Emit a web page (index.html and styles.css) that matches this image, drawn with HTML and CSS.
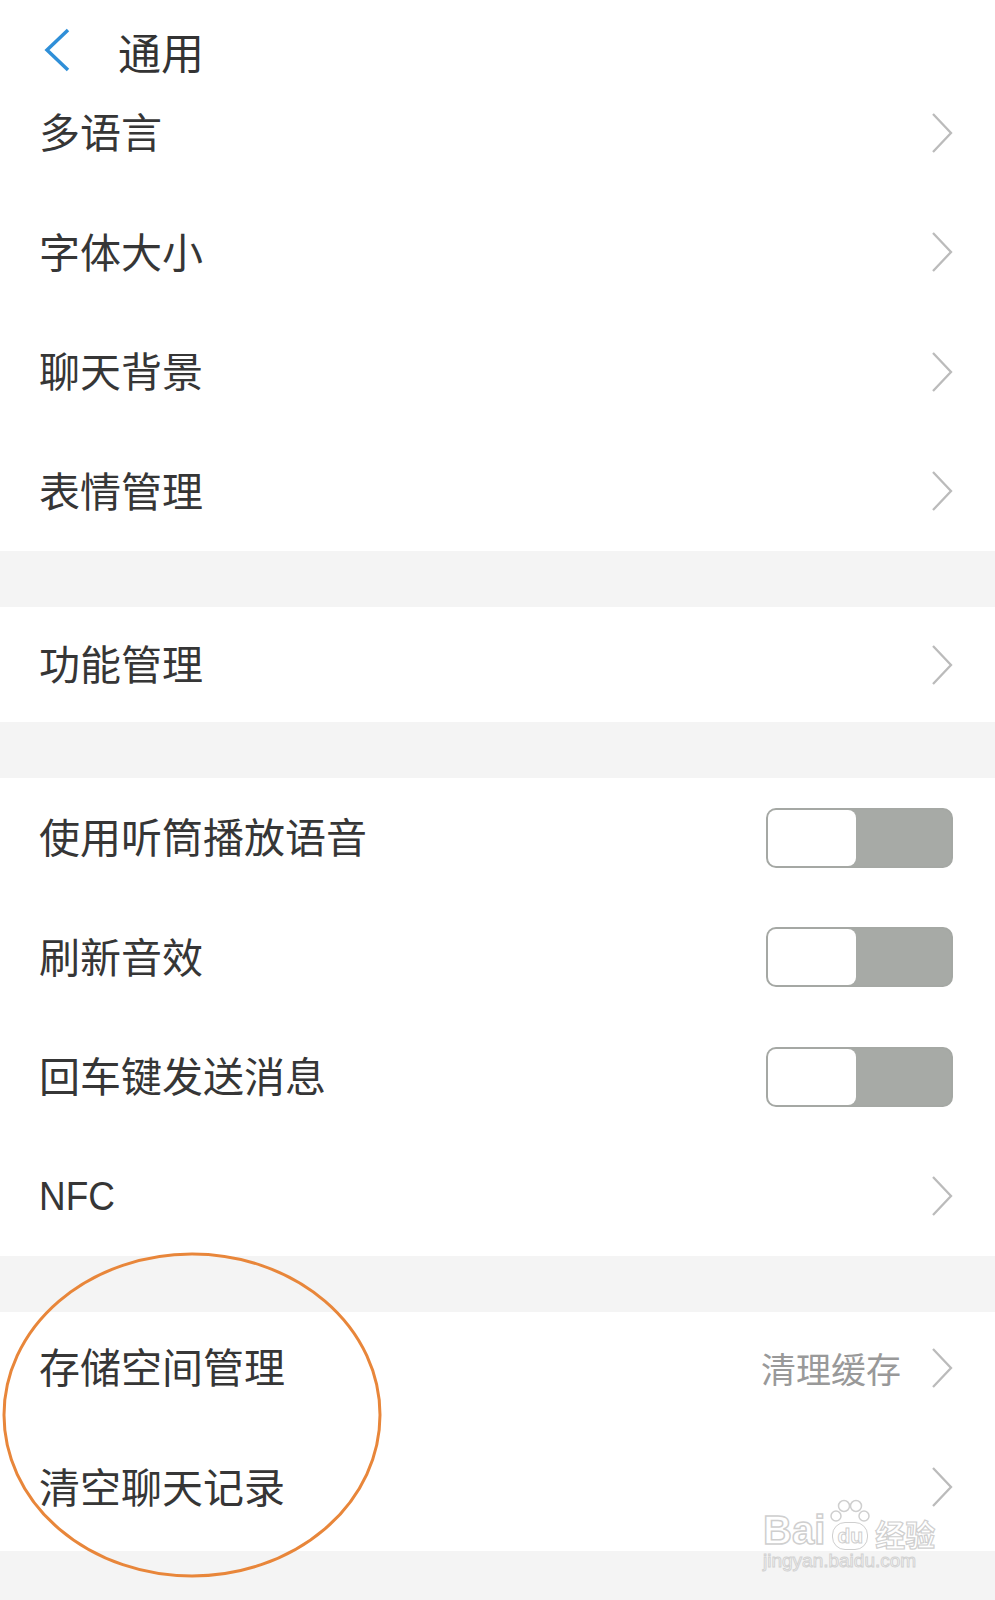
FILE: index.html
```html
<!DOCTYPE html>
<html lang="zh-CN">

<head>
  <meta charset="UTF-8">
  <meta name="viewport" content="width=device-width, initial-scale=1.0">
  <title>通用</title>
  <link rel="stylesheet" href="styles.css">
</head>

<body>
  <div class="screen">
    <header class="topbar">
      <svg class="back" viewBox="0 0 28 44" width="28" height="44">
        <polyline points="25,2 4,22 25,42" />
      </svg>
      <h1>通用</h1>
    </header>

    <section class="group first">
      <div class="row"><span class="label">多语言</span><svg class="chev" viewBox="0 0 22 40"><polyline points="2,1 20,20 2,39" /></svg></div>
      <div class="row"><span class="label">字体大小</span><svg class="chev" viewBox="0 0 22 40"><polyline points="2,1 20,20 2,39" /></svg></div>
      <div class="row"><span class="label">聊天背景</span><svg class="chev" viewBox="0 0 22 40"><polyline points="2,1 20,20 2,39" /></svg></div>
      <div class="row"><span class="label">表情管理</span><svg class="chev" viewBox="0 0 22 40"><polyline points="2,1 20,20 2,39" /></svg></div>
    </section>

    <section class="group">
      <div class="row short"><span class="label">功能管理</span><svg class="chev" viewBox="0 0 22 40"><polyline points="2,1 20,20 2,39" /></svg></div>
    </section>

    <section class="group">
      <div class="row"><span class="label">使用听筒播放语音</span><span class="toggle"><span class="knob"></span></span></div>
      <div class="row"><span class="label">刷新音效</span><span class="toggle"><span class="knob"></span></span></div>
      <div class="row"><span class="label">回车键发送消息</span><span class="toggle"><span class="knob"></span></span></div>
      <div class="row"><span class="label latin">NFC</span><svg class="chev" viewBox="0 0 22 40"><polyline points="2,1 20,20 2,39" /></svg></div>
    </section>

    <section class="group last">
      <div class="row"><span class="label">存储空间管理</span><span class="hint">清理缓存</span><svg class="chev" viewBox="0 0 22 40"><polyline points="2,1 20,20 2,39" /></svg></div>
      <div class="row"><span class="label">清空聊天记录</span><svg class="chev" viewBox="0 0 22 40"><polyline points="2,1 20,20 2,39" /></svg></div>
    </section>

    <!-- hand-drawn highlight -->
    <svg class="circle" viewBox="0 0 384 330" width="384" height="330">
      <ellipse cx="192" cy="164" rx="188" ry="161" />
    </svg>

    <div class="watermark">
      <div class="wm-top">
        <span class="wm-bai">Bai</span>
        <span class="wm-du">
          <svg class="paw" viewBox="0 0 48 30" width="48" height="30">
            <circle cx="10" cy="18" r="5" />
            <circle cx="18" cy="8" r="5.5" />
            <circle cx="30" cy="8" r="5.5" />
            <circle cx="38" cy="18" r="5" />
          </svg>
          <span class="du">du</span>
        </span>
        <span class="wm-cn">经验</span>
      </div>
      <div class="wm-url">jingyan.baidu.com</div>
    </div>
  </div>
</body>

</html>
```

FILE: styles.css
```css
body {
  margin: 0;
  background-color: #f4f4f4;
  font-family: "Noto Sans CJK SC", "Noto Sans", sans-serif;
  color: #333;
}

.screen {
  position: relative;
  width: 995px;
  height: 1600px;
  overflow: hidden;
  background-color: #f4f4f4;
}

.topbar {
  height: 73px;
  background-color: #fff;
  display: flex;
  align-items: flex-end;
  padding-left: 43px;
  box-sizing: border-box;
}

.back {
  margin-bottom: 1px;
}

.back polyline {
  fill: none;
  stroke: #2f8fd8;
  stroke-width: 3.5;
}

h1 {
  margin: 0 0 0 47px;
  font-size: 43px;
  font-weight: 400;
  line-height: 1;
  color: #333;
}

.group {
  background-color: #fff;
  margin-top: 56px;
}

.group.first {
  margin-top: 0;
}

.row {
  height: 119.5px;
  display: flex;
  align-items: center;
  padding: 0 42px 0 39px;
}

.label {
  flex-grow: 1;
  font-size: 41px;
  line-height: 1;
  color: #363636;
  margin-top: -4px;
}

.group.last .row {
  box-sizing: border-box;
  padding-bottom: 8px;
}

.row.short {
  height: 115px;
}

.label.latin {
  font-family: "Liberation Sans", Arial, sans-serif;
  font-size: 41px;
  margin-top: 0;
  transform: scaleX(0.9);
  transform-origin: left center;
}

.hint {
  font-size: 35px;
  color: #999;
  margin-right: 30px;
}

.chev {
  width: 22px;
  height: 40px;
}

.chev polyline {
  fill: none;
  stroke: #bbb;
  stroke-width: 2.3;
}

.toggle {
  width: 187px;
  height: 60px;
  box-sizing: border-box;
  border: 2px solid #a5a8a4;
  border-radius: 10px;
  background-color: #a7aaa6;
  display: flex;
}

.knob {
  width: 88px;
  height: 100%;
  background-color: #fff;
  border-radius: 8px;
}

.circle {
  position: absolute;
  left: 0;
  top: 1251px;
}

.circle ellipse {
  fill: none;
  stroke: #e8863a;
  stroke-width: 3;
}

.watermark {
  position: absolute;
  left: 763px;
  top: 1488px;
  white-space: nowrap;
  color: rgba(255, 255, 255, 0.7);
  font-family: "Liberation Sans", Arial, sans-serif;
}

.wm-top {
  display: flex;
  align-items: flex-end;
  height: 62px;
}

.wm-bai {
  font-size: 40px;
  font-weight: 700;
  line-height: 1;
  -webkit-text-stroke: 1.5px #cfcfcf;
}

.wm-du {
  display: flex;
  flex-direction: column;
  align-items: center;
  flex-shrink: 0;
  margin: 0 1px;
}

.paw circle {
  fill: rgba(255, 255, 255, 0.7);
  stroke: #cfcfcf;
  stroke-width: 1.5;
}

.du {
  margin-top: -6px;
  font-size: 21px;
  font-weight: 700;
  line-height: 26px;
  padding: 0 4px;
  border: 1.5px solid #cfcfcf;
  border-radius: 13px;
  -webkit-text-stroke: 1px #cfcfcf;
}

.wm-cn {
  font-family: "Noto Sans CJK SC", sans-serif;
  font-size: 30px;
  font-weight: 700;
  line-height: 1.1;
  flex-shrink: 0;
  -webkit-text-stroke: 1.2px #cfcfcf;
}

.wm-url {
  font-size: 19px;
  line-height: 22px;
  -webkit-text-stroke: 1px #d2d2d2;
}
```
